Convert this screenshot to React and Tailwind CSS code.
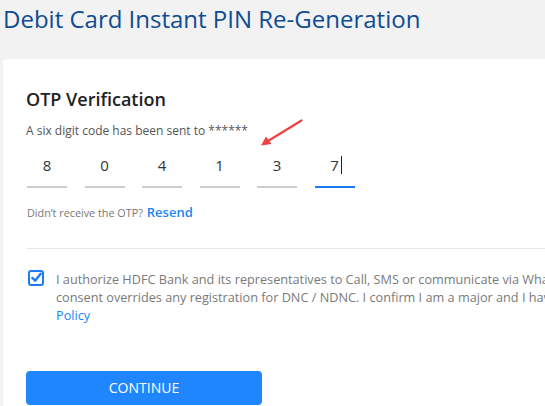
export default function App() {
  const digits = ["8", "0", "4", "1", "3", "7"];
  return (
    <div
      className="w-[545px] h-[406px] overflow-hidden bg-[#f2f2f2] relative"
      style={{ fontFamily: '"Open Sans", "Noto Sans", sans-serif' }}
    >
      <h1 className="pl-[3px] pt-[2px] h-[59px] text-[24px] leading-[34px] text-[#0f4c92] whitespace-nowrap">
        Debit Card Instant PIN Re-Generation
      </h1>
      <div className="ml-[3px] w-[700px] h-[400px] bg-white rounded-[4px] pl-[23px] pt-[28px]">
        <h2 className="text-[18px] leading-[24px] font-semibold text-[#222]">OTP Verification</h2>
        <p className="mt-[12px] text-[12px] leading-[16px] text-[#555]">A six digit code has been sent to ******</p>
        <div className="flex gap-[17.5px] ml-[1px] mt-[12px]">
          {digits.map((d, i) => (
            <div
              key={i}
              className={
                "w-[40px] h-[37px] flex items-start justify-center pt-[4px] text-[15px] leading-[20px] text-[#333] border-b-2 " +
                (i === 5 ? "border-[#1a7cf0]" : "border-[#cccccc]")
              }
            >
              <span className="relative">
                {d}
                {i === 5 && <span className="absolute right-[-3px] top-[1px] w-px h-[18px] bg-[#222]" />}
              </span>
            </div>
          ))}
        </div>
        <div className="mt-[15px] flex items-baseline gap-[4px] ml-[1px]">
          <span className="text-[10.8px] text-[#777]">Didn’t receive the OTP?</span>
          <span className="text-[13px] font-semibold text-[#1a86f5]">Resend</span>
        </div>
        <div className="mt-[25px] ml-[1px] h-px bg-[#e6e6e6]" />
        <div className="mt-[21px] ml-[2px] flex gap-[12px]">
          <div className="w-[16px] h-[16px] shrink-0 rounded-[3px] border-2 border-[#1a7cf0] bg-white flex items-center justify-center">
            <svg viewBox="0 0 12 12" className="w-[11px] h-[11px]">
              <path d="M1.5 6.5 L4.5 9.5 L10.5 2" fill="none" stroke="#1a7cf0" strokeWidth="2.6" strokeLinecap="round" strokeLinejoin="round" />
            </svg>
          </div>
          <div className="text-[12.7px] leading-[18px] text-[#7a7a7a]">
            <div className="whitespace-nowrap">I authorize HDFC Bank and its representatives to Call, SMS or communicate via WhatsApp regarding their products and offers. This</div>
            <div className="whitespace-nowrap">consent overrides any registration for DNC / NDNC. I confirm I am a major and I have read and agree to the Privacy</div>
            <div className="text-[#1a86f5]">Policy</div>
          </div>
        </div>
        <button className="mt-[47px] w-[236px] h-[34px] rounded-[4px] bg-[#1f86ff] text-white text-[14px] flex items-center justify-center">
          CONTINUE
        </button>
      </div>
      <svg className="absolute left-0 top-0 pointer-events-none" width="545" height="406">
        <line x1="301.5" y1="120.5" x2="268" y2="141" stroke="#f04040" strokeWidth="2.2" strokeLinecap="round" />
        <polygon points="261,145.5 266,136.5 271.5,144" fill="#f04040" />
      </svg>
    </div>
  );
}
